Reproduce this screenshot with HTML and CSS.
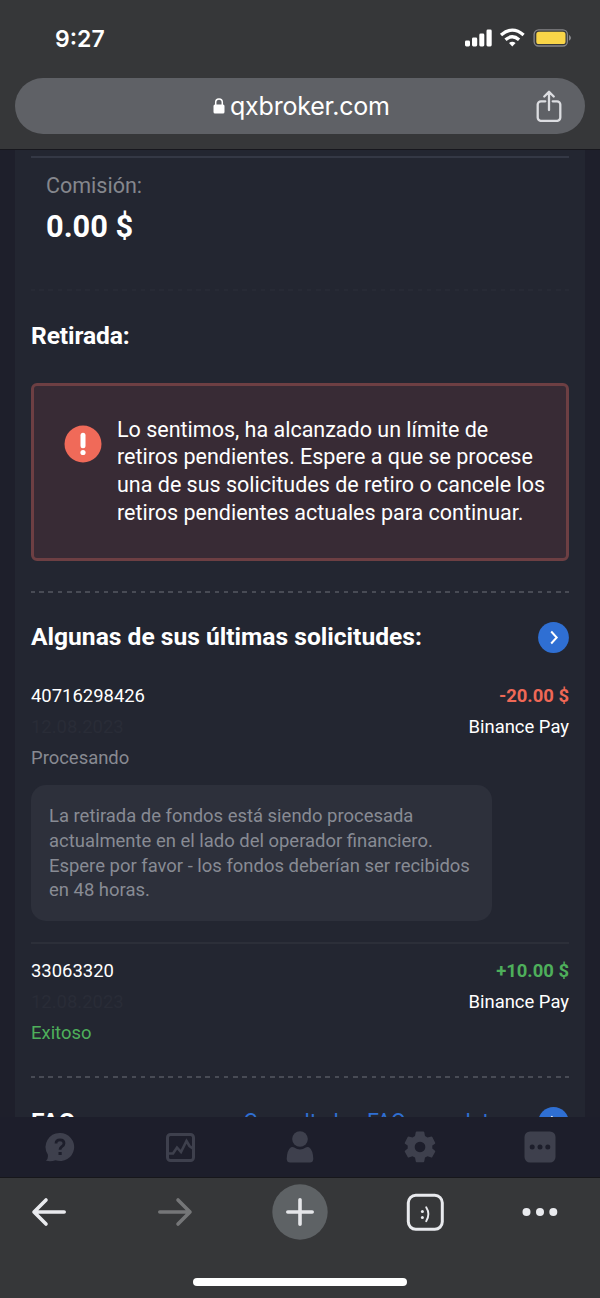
FILE: index.html
```html
<!DOCTYPE html>
<html lang="es">
<head>
<meta charset="utf-8">
<title>qxbroker.com</title>
<link rel="stylesheet" href="styles.css">
</head>
<body>
<div class="phone">
  <header class="chrome-top">
    <div class="status">
      <span class="clock">9:27</span>
      <svg class="status-icons" width="108" height="20" viewBox="0 0 108 20">
        <g fill="#fff">
          <rect x="0" y="12.500" width="5" height="6" rx="1.400"/><rect x="7" y="9.500" width="5.200" height="9" rx="1.400"/>
          <rect x="14.300" y="5.500" width="5" height="13" rx="1.400"/><rect x="21.500" y="1.500" width="5.200" height="17" rx="1.400"/>
          <path d="M47.300 18.600L44 15Q47.300 12.400 50.600 15Z"/>
        </g>
        <g fill="none" stroke="#fff" stroke-width="3.300">
          <path d="M36 7Q47.300-2.700 58.600 7"/><path d="M40.500 11.800Q47.300 5.800 54.100 11.800"/>
        </g>
        <rect x="69.100" y="1.800" width="33.300" height="16.200" rx="4.500" fill="none" stroke="#858588" stroke-width="1.300"/>
        <rect x="71.300" y="3.800" width="29.200" height="12.300" rx="2.600" fill="#f9d548"/>
        <path d="M104.500 7.600q2.200 2.300 0 4.600z" fill="#858588" stroke="#858588"/>
      </svg>
    </div>
    <div class="address">
      <svg class="lock" width="12" height="16" viewBox="0 0 12 16"><rect x=".5" y="6.500" width="11" height="9" rx="1.500" fill="#fff"/><path d="M2.700 7V4.300a3.300 3.300 0 0 1 6.600 0V7" fill="none" stroke="#fff" stroke-width="1.500"/></svg>
      <span class="host">qxbroker.com</span>
      <svg class="share" width="26" height="32" viewBox="0 0 26 32" fill="none" stroke="#dcdde1" stroke-width="2.300" stroke-linecap="round" stroke-linejoin="round"><path d="M9.300 11.300H5a3.300 3.300 0 0 0-3.300 3.300v13A3.300 3.300 0 0 0 5 30.900h16a3.300 3.300 0 0 0 3.300-3.300v-13a3.300 3.300 0 0 0-3.300-3.300h-4.300M13 20V2M8.300 6.500L13 1.800l4.700 4.700"/></svg>
    </div>
  </header>

  <main class="page">
    <section class="card">
      <div class="fee">
        <div class="fee-label">Comisión:</div>
        <div class="fee-value">0.00 $</div>
      </div>
      <div class="dashed faint"></div>
      <h2 class="title withdraw-title">Retirada:</h2>
      <div class="alert">
        <svg class="alert-icon" width="38" height="38" viewBox="0 0 38 38"><circle cx="19" cy="19" r="18.500" fill="#f06a59"/><path d="M19 10.300v10.500" stroke="#fff" stroke-width="5" stroke-linecap="round"/><circle cx="19" cy="27.500" r="2.600" fill="#fff"/></svg>
        <p class="alert-text">Lo sentimos, ha alcanzado un límite de<br>retiros pendientes. Espere a que se procese<br>una de sus solicitudes de retiro o cancele los<br>retiros pendientes actuales para continuar.</p>
      </div>
      <div class="dashed"></div>
      <div class="section-head">
        <h2 class="title">Algunas de sus últimas solicitudes:</h2>
        <svg width="31" height="31" viewBox="0 0 31 31"><circle cx="15.500" cy="15.500" r="15.400" fill="#2f6fd3"/><path d="M13.200 9.500L18.700 15.500L13.200 21.500" fill="none" stroke="#fff" stroke-width="2"/></svg>
      </div>
      <div class="request">
        <div class="row"><span>40716298426</span><span class="amount out">-20.00 $</span></div>
        <div class="row"><span class="date">12.08.2023</span><span>Binance Pay</span></div>
        <div class="row pending">Procesando</div>
        <p class="note">La retirada de fondos está siendo procesada<br>actualmente en el lado del operador financiero.<br>Espere por favor - los fondos deberían ser recibidos<br>en 48 horas.</p>
      </div>
      <div class="request second">
        <div class="row"><span>33063320</span><span class="amount in">+10.00 $</span></div>
        <div class="row"><span class="date">12.08.2023</span><span>Binance Pay</span></div>
        <div class="row done">Exitoso</div>
      </div>
      <div class="dashed"></div>
      <div class="section-head faq">
        <h2 class="title">FAQ:</h2>
        <span class="faq-link">Consulte las FAQ completas</span>
        <svg width="31" height="31" viewBox="0 0 31 31"><circle cx="15.500" cy="15.500" r="15.400" fill="#2f6fd3"/><path d="M13.200 9.500L18.700 15.500L13.200 21.500" fill="none" stroke="#fff" stroke-width="2"/></svg>
      </div>
    </section>
  </main>

  <nav class="tabs">
    <svg width="32" height="32" viewBox="0 0 32 32"><path d="M16 2a14 14 0 1 1-4.500 27.200Q7 31 2 29.800Q4.500 28 3.800 23.500A14 14 0 0 1 16 2Z" fill="#3e404d"/><path d="M12 12.500q0-3.700 4-3.700t4 3.400q0 2-2.200 3.400Q16 16.900 16 18.800" fill="none" stroke="#1d1e2b" stroke-width="2.800"/><rect x="14.500" y="21" width="3.200" height="3" fill="#1d1e2b"/></svg>
    <svg width="32" height="32" viewBox="0 0 32 32" fill="none" stroke="#3e404d"><rect x="3.500" y="3.500" width="26" height="26" rx="3" stroke-width="3"/><path d="M4 22.500h5l4-6 4 4.500 5.500-11 3 5 4 3" stroke-width="2.600"/></svg>
    <svg width="32" height="32" viewBox="0 0 32 32" fill="#3e404d"><circle cx="16" cy="8" r="7.800"/><path d="M7 16.200Q9 15.500 10.200 16.500Q16 20.500 21.800 16.500Q23 15.500 25 16.200Q29 19 29.300 28Q29 31.500 26 31.500H6Q3 31.500 2.700 28Q3 19 7 16.200Z"/></svg>
    <svg width="32" height="32" viewBox="0 0 32 32"><path fill="#3e404d" fill-rule="evenodd" d="M11.800 1Q12 .5 12.600.5h6.800q.6 0 .8.500l.8 4 2.500 1.400 4-.8q.5 0 .8.500l2.900 5.600q.2.600-.2 1L28.300 14.500v3L31 19.800q.4.500.2 1l-2.900 5.100q-.3.600-.9.500l-3.900-1.200-2.500 1.400-.8 3.900q-.2.800-.8.800h-6.800q-.6 0-.8-.800l-.8-3.900-2.500-1.400-3.900 1.200q-.6.100-.9-.5L.8 20.800q-.2-.5.200-1l2.700-2.300v-3L1 12.700q-.4-.4-.2-1l2.900-5.600q.3-.5.800-.5l4 .8L11 5zM16 10.700a5.300 5.300 0 1 0 .01 0z"/></svg>
    <svg width="32" height="32" viewBox="0 0 32 32"><rect x=".5" y=".5" width="31" height="31" rx="5.500" fill="#3e404d"/><g fill="#1d1e2b"><circle cx="8.200" cy="16" r="2.500"/><circle cx="16" cy="16" r="2.500"/><circle cx="23.800" cy="16" r="2.500"/></g></svg>
  </nav>

  <footer class="chrome-bottom">
    <div class="tools">
      <svg width="56" height="56" viewBox="0 0 56 56" fill="none" stroke="#e9eaee" stroke-width="3.600" stroke-linecap="round" stroke-linejoin="round"><path d="M43.200 28H13M25 16L13 28l12 12"/></svg>
      <svg width="56" height="56" viewBox="0 0 56 56" fill="none" stroke="#757678" stroke-width="3.600" stroke-linecap="round" stroke-linejoin="round"><path d="M12.800 28H43M31 16l12 12-12 12"/></svg>
      <svg width="56" height="56" viewBox="0 0 56 56"><circle cx="28" cy="28" r="27.700" fill="#5e6265"/><path d="M15.800 28h24.400M28 15.800v24.400" stroke="#e5e6e9" stroke-width="3.600" stroke-linecap="round"/></svg>
      <svg width="56" height="56" viewBox="0 0 56 56"><rect x="10.300" y="11.300" width="34" height="34" rx="7.500" fill="none" stroke="#e9eaee" stroke-width="3"/><g fill="#e9eaee"><circle cx="24.400" cy="27.500" r="1.500"/><circle cx="24.400" cy="33.500" r="1.500"/></g><path d="M28.200 23.300q4.400 7 0 14" fill="none" stroke="#e9eaee" stroke-width="1.900" stroke-linecap="round"/></svg>
      <svg class="more" width="56" height="56" viewBox="0 0 56 56" fill="#e9eaee"><circle cx="14.500" cy="28" r="4"/><circle cx="28" cy="28" r="4"/><circle cx="41.300" cy="28" r="4"/></svg>
    </div>
    <div class="home-bar"></div>
  </footer>
</div>
</body>
</html>
```
FILE: styles.css
```css
* { box-sizing: border-box; }
body { margin: 0; background: #363739; font-family: Roboto, "Liberation Sans", sans-serif; }
h2, p { margin: 0; }
svg { display: block; flex: none; }
.phone { width: 600px; height: 1298px; display: flex; flex-direction: column; overflow: hidden; color: #fff; white-space: nowrap; }

.chrome-top { height: 150px; flex: none; background: #363739; border-bottom: 1px solid #17171d; padding: 23px 15px 0; }
.status { display: flex; justify-content: space-between; align-items: center; height: 30px; padding: 0 12px 0 40px; font-family: Inter, sans-serif; }
.clock { font-size: 23px; font-weight: 600; padding-top: 1px; }
.address { margin-top: 25px; height: 56px; border-radius: 28px; background: #5f6166; display: flex; align-items: center; padding: 0 23px 0 198px; font-family: Inter, sans-serif; }
.host { font-size: 25px; letter-spacing: -0.2px; margin-left: 5px; }
.share { margin-left: auto; }

.page { height: 967px; flex: none; background: #1e1f2b; padding: 0 15px; overflow: hidden; }
.card { height: 1010px; background: #232631; padding: 6px 16px 0; }
.fee { border-top: 2px solid #343845; height: 133px; padding: 14px 0 0 15px; }
.fee-label { font-size: 21.5px; line-height: 28px; color: #85878d; }
.fee-value { font-size: 30.8px; line-height: 36px; margin-top: 9px; font-weight: 700; }
.dashed { height: 2px; margin: 0; background: repeating-linear-gradient(90deg, #484b55 0 4.6px, transparent 4.6px 9.23px) -1px 0; }
.faint { opacity: 0.1; }
.title { font-size: 24.6px; line-height: 32px; font-weight: 700; }
.withdraw-title { margin: 29px 0 30.5px; letter-spacing: -0.1px; }
.alert { height: 178px; border: 3px solid #6d3f43; border-radius: 6px; background: #382b35; display: flex; padding: 30px 0 0 30px; margin-bottom: 30.5px; }
.alert-icon { margin-top: 9.5px; }
.alert-text { margin-left: 15px; font-size: 21.5px; line-height: 27.7px; }
.section-head { display: flex; justify-content: space-between; align-items: center; height: 32px; margin-top: 28px; }
.request { margin-top: 28px; font-size: 18.46px; }
.row { display: flex; justify-content: space-between; line-height: 30.8px; }
.amount { font-weight: 700; }
.out { color: #ef6856; }
.in { color: #4eaf5b; }
.date { color: #292c37; }
.pending { color: #888a92; }
.done { color: #4eaf5b; }
.note { width: 461px; height: 136px; margin-top: 12px; padding: 19px 18px; border-radius: 15px; background: #2d303b; color: #888b94; line-height: 24.6px; }
.second { margin-top: 21px; border-top: 2px solid #2c2f39; padding-top: 12px; height: 134px; }
.faq { justify-content: flex-start; }
.faq-link { margin-left: auto; margin-right: 26px; padding-bottom: 2px; color: #2f6fd3; font-size: 21.5px; }

.tabs { height: 61px; flex: none; background: #1d1e2b; border-bottom: 1px solid #17171b; display: grid; grid-template-columns: repeat(5, 120px); justify-items: center; align-items: center; }
.chrome-bottom { flex: 1; background: #363739; }
.tools { display: flex; gap: 69.5px; padding: 5.5px 0 0 21px; }
.more { margin-left: -11px; }
.home-bar { width: 214px; height: 8px; border-radius: 4px; background: #fff; margin: 38px auto 0; }
```
